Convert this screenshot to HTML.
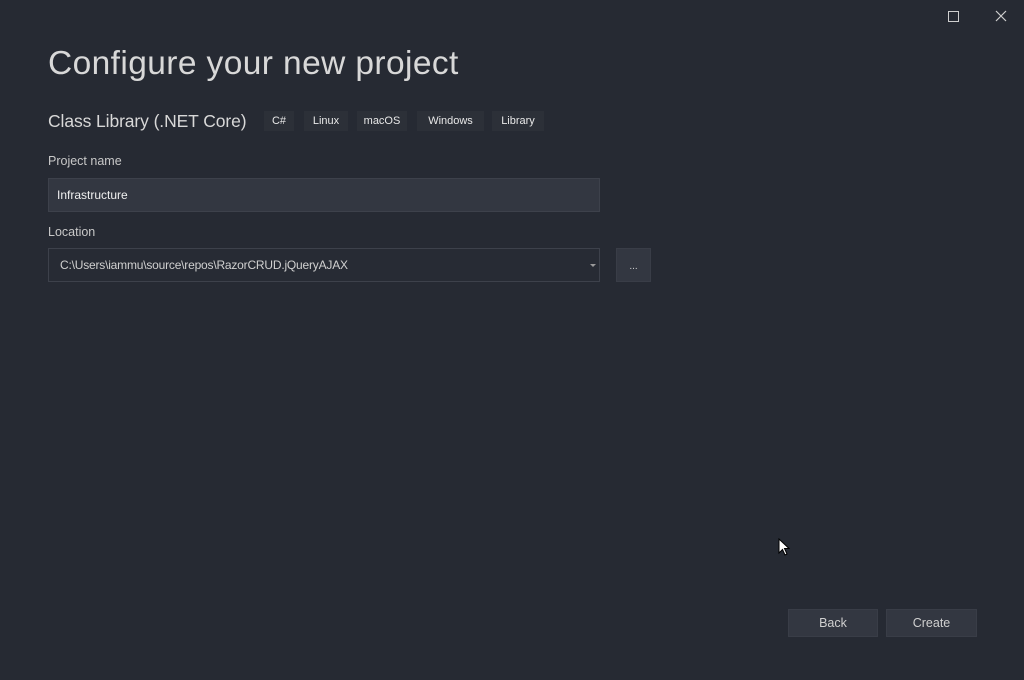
<!DOCTYPE html>
<html><head><meta charset="utf-8"><style>
body{margin:0;width:1024px;height:680px;background:#262a33;font-family:"Liberation Sans",sans-serif;color:#d8d8d8;position:relative;overflow:hidden}
.a{position:absolute}
h1{position:absolute;left:48px;top:45px;margin:0;font-weight:normal;font-size:33.5px;color:#d8d8d8;letter-spacing:.4px}
.sub{left:48px;top:111px;font-size:17.5px;color:#d8d8d8;letter-spacing:-.1px}
.tag{top:111px;height:20px;line-height:20px;font-size:11px;background:#2c3038;color:#e8e8e8;text-align:center}
.lbl{font-size:12.5px;color:#c8c8c8}
.in{background:#333741;border:1px solid #3d414b;box-sizing:border-box;font-size:12px;color:#f0f0f0}
.btn{background:#333741;border:1px solid #393d47;box-sizing:border-box;font-size:12.5px;color:#d0d0d0;text-align:center}
</style></head><body>
<div class="a" style="left:948px;top:11px;width:9px;height:9px;border:1px solid #cfcfcf"></div>
<svg class="a" style="left:995px;top:10px" width="12" height="12"><path d="M1 1L11 11M11 1L1 11" stroke="#cfcfcf" stroke-width="1.2"/></svg>
<h1>Configure your new project</h1>
<div class="a sub">Class Library (.NET Core)</div>
<div class="a tag" style="left:264px;width:30px">C#</div>
<div class="a tag" style="left:304px;width:44px">Linux</div>
<div class="a tag" style="left:357px;width:50px">macOS</div>
<div class="a tag" style="left:417px;width:67px">Windows</div>
<div class="a tag" style="left:492px;width:52px">Library</div>
<div class="a lbl" style="left:48px;top:154px">Project name</div>
<div class="a in" style="left:48px;top:178px;width:552px;height:34px;line-height:32px;padding-left:8px">Infrastructure</div>
<div class="a lbl" style="left:48px;top:225px">Location</div>
<div class="a in" style="left:48px;top:248px;width:552px;height:34px;line-height:32px;padding-left:11px;background:#272b34;color:#d0d0d0;letter-spacing:-.2px">C:\Users\iammu\source\repos\RazorCRUD.jQueryAJAX</div>
<div class="a" style="left:590px;top:264px;width:0;height:0;border-left:3px solid transparent;border-right:3px solid transparent;border-top:3px solid #9a9a9a"></div>
<div class="a btn" style="left:616px;top:248px;width:35px;height:34px;line-height:36px;font-size:10px">...</div>
<svg class="a" style="left:778px;top:538px" width="12" height="19"><path d="M1 1V15L4.5 11.5L7 17L9 16L6.5 10.5H11Z" fill="#fff" stroke="#000" stroke-width="1"/></svg>
<div class="a btn" style="left:788px;top:609px;width:90px;height:28px;line-height:27px">Back</div>
<div class="a btn" style="left:886px;top:609px;width:91px;height:28px;line-height:27px">Create</div>
</body></html>
